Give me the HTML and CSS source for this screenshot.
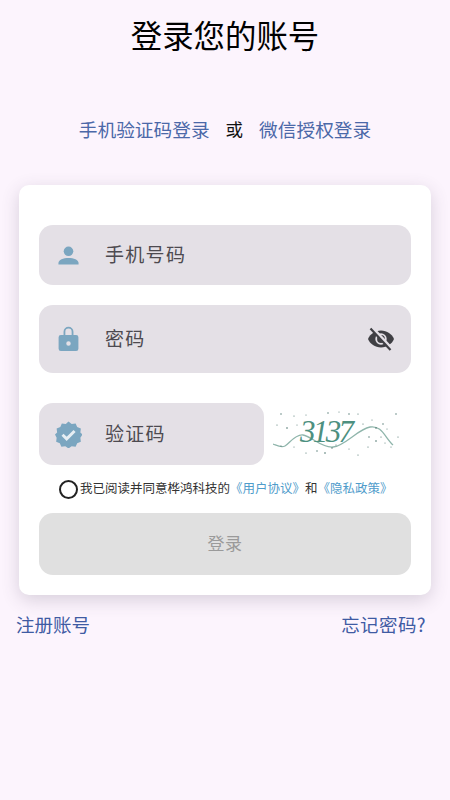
FILE: index.html
```html
<!DOCTYPE html>
<html lang="zh-CN">
<head>
<meta charset="utf-8">
<title>登录您的账号</title>
<link rel="stylesheet" href="styles.css">
</head>
<body>
<main class="page">
  <h1 class="title">登录您的账号</h1>
  <nav class="methods">
    <a class="method">手机验证码登录</a>
    <span class="or">或</span>
    <a class="method">微信授权登录</a>
  </nav>
  <section class="card">
    <div class="field field-phone">
      <svg class="icon" viewBox="0 0 24 24"><circle cx="12" cy="7.600" r="5"/><path d="M1.500 21.500v-1.700c0-3.400 5-5.300 10.500-5.300s10.500 1.900 10.500 5.300v1.700z"/></svg>
      <span class="label">手机号码</span>
    </div>
    <div class="field field-password">
      <svg class="icon icon-lock" viewBox="0 0 24 30"><path fill-rule="evenodd" d="M6.500 11V7.500a5.500 5.500 0 0 1 11 0V11h3A2.500 2.500 0 0 1 23 13.500v13a2.500 2.500 0 0 1-2.500 2.500h-17A2.500 2.500 0 0 1 1 26.500v-13A2.500 2.500 0 0 1 3.500 11zM8.500 11h7V7.500a3.500 3.500 0 0 0-7 0zM12 18a2.500 2.500 0 1 0 0 5 2.500 2.500 0 0 0 0-5z"/></svg>
      <span class="label">密码</span>
      <svg class="eye" viewBox="0 0 28 24"><path d="M14 3.500C8 3.500 3 7.100 1 12c2 4.900 7 8.500 13 8.500s11-3.600 13-8.500c-2-4.900-7-8.500-13-8.500z"/><circle cx="14" cy="12" r="4.800" fill="none" stroke="#e4e0e6" stroke-width="1.800"/><path d="M5 1 25 22.500" stroke="#e4e0e6" stroke-width="4"/><path d="M3.500 1.500 23.500 23" stroke="#3f3f44" stroke-width="2.200"/></svg>
    </div>
    <div class="captcha-row">
      <div class="field field-captcha">
        <svg class="icon icon-badge" viewBox="0 0 28 28"><path d="M14 .5l3.300 2.500 4.100-.5 1.600 3.800 3.800 1.600-.5 4.100 2.200 2-2.200 3.300.5 4.100-3.800 1.600-1.600 3.800-4.100-.5-3.300 2.100-3.300-2.100-4.100.5-1.600-3.800-3.800-1.600.5-4.100L0 14l2.200-2-.5-4.100 3.800-1.600 1.600-3.800 4.100.5z"/><path class="tick" d="M7.800 14.200l4.300 4.300 8.200-8.200"/></svg>
        <span class="label">验证码</span>
      </div>
      <svg class="captcha" viewBox="0 0 130 46">
        <path class="wave" d="M0 33C5 35 8 37 12 35S22 23 30 24S48 37 60 36S85 18 97 16S112 27 120 34"/>
        <text class="digits" x="27" y="31" textLength="54" lengthAdjust="spacing">3137</text>
        <g class="dots">
          <circle cx="8" cy="3" r=".7"/><circle cx="21" cy="5" r=".6"/><circle cx="33" cy="4" r=".5"/><circle cx="55" cy="2" r=".7"/><circle cx="66" cy="1" r=".5"/><circle cx="76" cy="3" r=".7"/><circle cx="85" cy="3" r=".6"/><circle cx="99" cy="9" r=".5"/>
          <circle cx="4" cy="14" r=".6"/><circle cx="14" cy="17" r=".8"/><circle cx="24" cy="14" r=".5"/><circle cx="90" cy="13" r=".6"/><circle cx="103" cy="17" r=".8"/><circle cx="110" cy="13" r=".7"/><circle cx="123" cy="3" r=".7"/><circle cx="114" cy="18" r=".5"/>
          <circle cx="8" cy="35" r=".6"/><circle cx="21" cy="36" r=".5"/><circle cx="33" cy="42" r=".6"/><circle cx="44" cy="40" r=".7"/><circle cx="52" cy="42" r=".8"/><circle cx="59" cy="37" r=".7"/><circle cx="63" cy="34" r=".6"/><circle cx="76" cy="38" r=".5"/><circle cx="85" cy="44" r=".6"/>
          <circle cx="96" cy="26" r=".7"/><circle cx="103" cy="30" r=".8"/><circle cx="108" cy="26" r=".6"/><circle cx="112" cy="32" r=".5"/><circle cx="95" cy="36" r=".6"/><circle cx="118" cy="36" r=".5"/><circle cx="125" cy="26" r=".6"/>
        </g>
      </svg>
    </div>
    <div class="agree">
      <span class="radio"></span>
      <p class="agree-text">我已阅读并同意桦鸿科技的<a class="doc">《用户协议》</a>和<a class="doc">《隐私政策》</a></p>
    </div>
    <button class="submit" type="button">登录</button>
  </section>
  <footer class="bottom">
    <a class="bottom-link">注册账号</a>
    <a class="bottom-link bottom-link-wide">忘记密码?</a>
  </footer>
</main>
</body>
</html>
```
FILE: styles.css
```css
* { box-sizing: border-box; }
html, body { margin: 0; height: 100%; }
body {
  background: #fcf4fd;
  font-family: "Noto Sans CJK SC", "Noto Sans", sans-serif;
  color: #000;
}
.page { display: flex; flex-direction: column; height: 800px; overflow: hidden; }
.title {
  margin: 13px 0 0;
  height: 44px;
  font-size: 31.4px;
  line-height: 44px;
  font-weight: 400;
  text-align: center;
}
.methods {
  margin-top: 60px;
  height: 24px;
  display: flex;
  justify-content: center;
  align-items: center;
  gap: 16px;
  font-size: 18.700px;
  line-height: 24px;
}
.method { color: #4b68a8; }
.or { font-size: 17.500px; color: #111; }
.card {
  margin: 44px 19px 0;
  height: 410px;
  padding: 40px 20px 0;
  background: #fff;
  border-radius: 10px;
  box-shadow: 0 5px 18px rgba(70, 60, 85, .2);
}
.field {
  display: flex;
  align-items: center;
  background: #e4e0e6;
  border-radius: 14px;
  padding-left: 18px;
}
.field-phone { height: 60px; }
.field-password { height: 68px; margin-top: 20px; }
.field-captcha { width: 225px; height: 62px; flex: none; padding-left: 16px; }
.icon { width: 23px; height: 23px; flex: none; fill: #7ba6c0; }
.icon-lock { height: 27px; margin-bottom: 2px; }
.icon-badge { width: 27px; height: 27px; }
.tick { fill: none; stroke: #e6eef3; stroke-width: 3; }
.label {
  margin: 0 0 4px 25px;
  font-size: 19px;
  letter-spacing: 1.300px;
  color: #4d4a50;
}
.field-captcha .label { margin-left: 23px; }
.eye { width: 28px; height: 24px; margin-left: auto; margin-right: 16px; fill: #3f3f44; }
.captcha-row { display: flex; align-items: center; margin-top: 30px; }
.captcha { width: 130px; height: 46px; margin-left: 9px; }
.wave { fill: none; stroke: #8fb5ab; stroke-width: 1.300; }
.digits {
  font-family: "Liberation Serif", serif;
  font-style: italic;
  font-size: 31px;
  fill: #4d9080;
}
.dots { fill: #47706a; }
.agree { display: flex; align-items: center; margin: 14px 0 0 20px; height: 20px; }
.radio {
  width: 19px;
  height: 19px;
  flex: none;
  border: 2px solid #222;
  border-radius: 50%;
}
.agree-text {
  margin: -2px 0 0 2px;
  font-size: 12.500px;
  line-height: 20px;
  white-space: nowrap;
  color: #333;
}
.doc { color: #4f9ccb; }
.submit {
  display: block;
  width: 100%;
  height: 62px;
  margin-top: 14px;
  padding: 0 0 4px;
  border: 0;
  border-radius: 14px;
  background: #e0e0e0;
  color: #9a9a9a;
  font: inherit;
  font-size: 17px;
  letter-spacing: .5px;
}
.bottom {
  display: flex;
  justify-content: space-between;
  margin-top: 16px;
  padding: 0 24px 0 16px;
  font-size: 18.500px;
  line-height: 26px;
}
.bottom-link { color: #3f5ba3; }
.bottom-link-wide { letter-spacing: .4px; }
```
